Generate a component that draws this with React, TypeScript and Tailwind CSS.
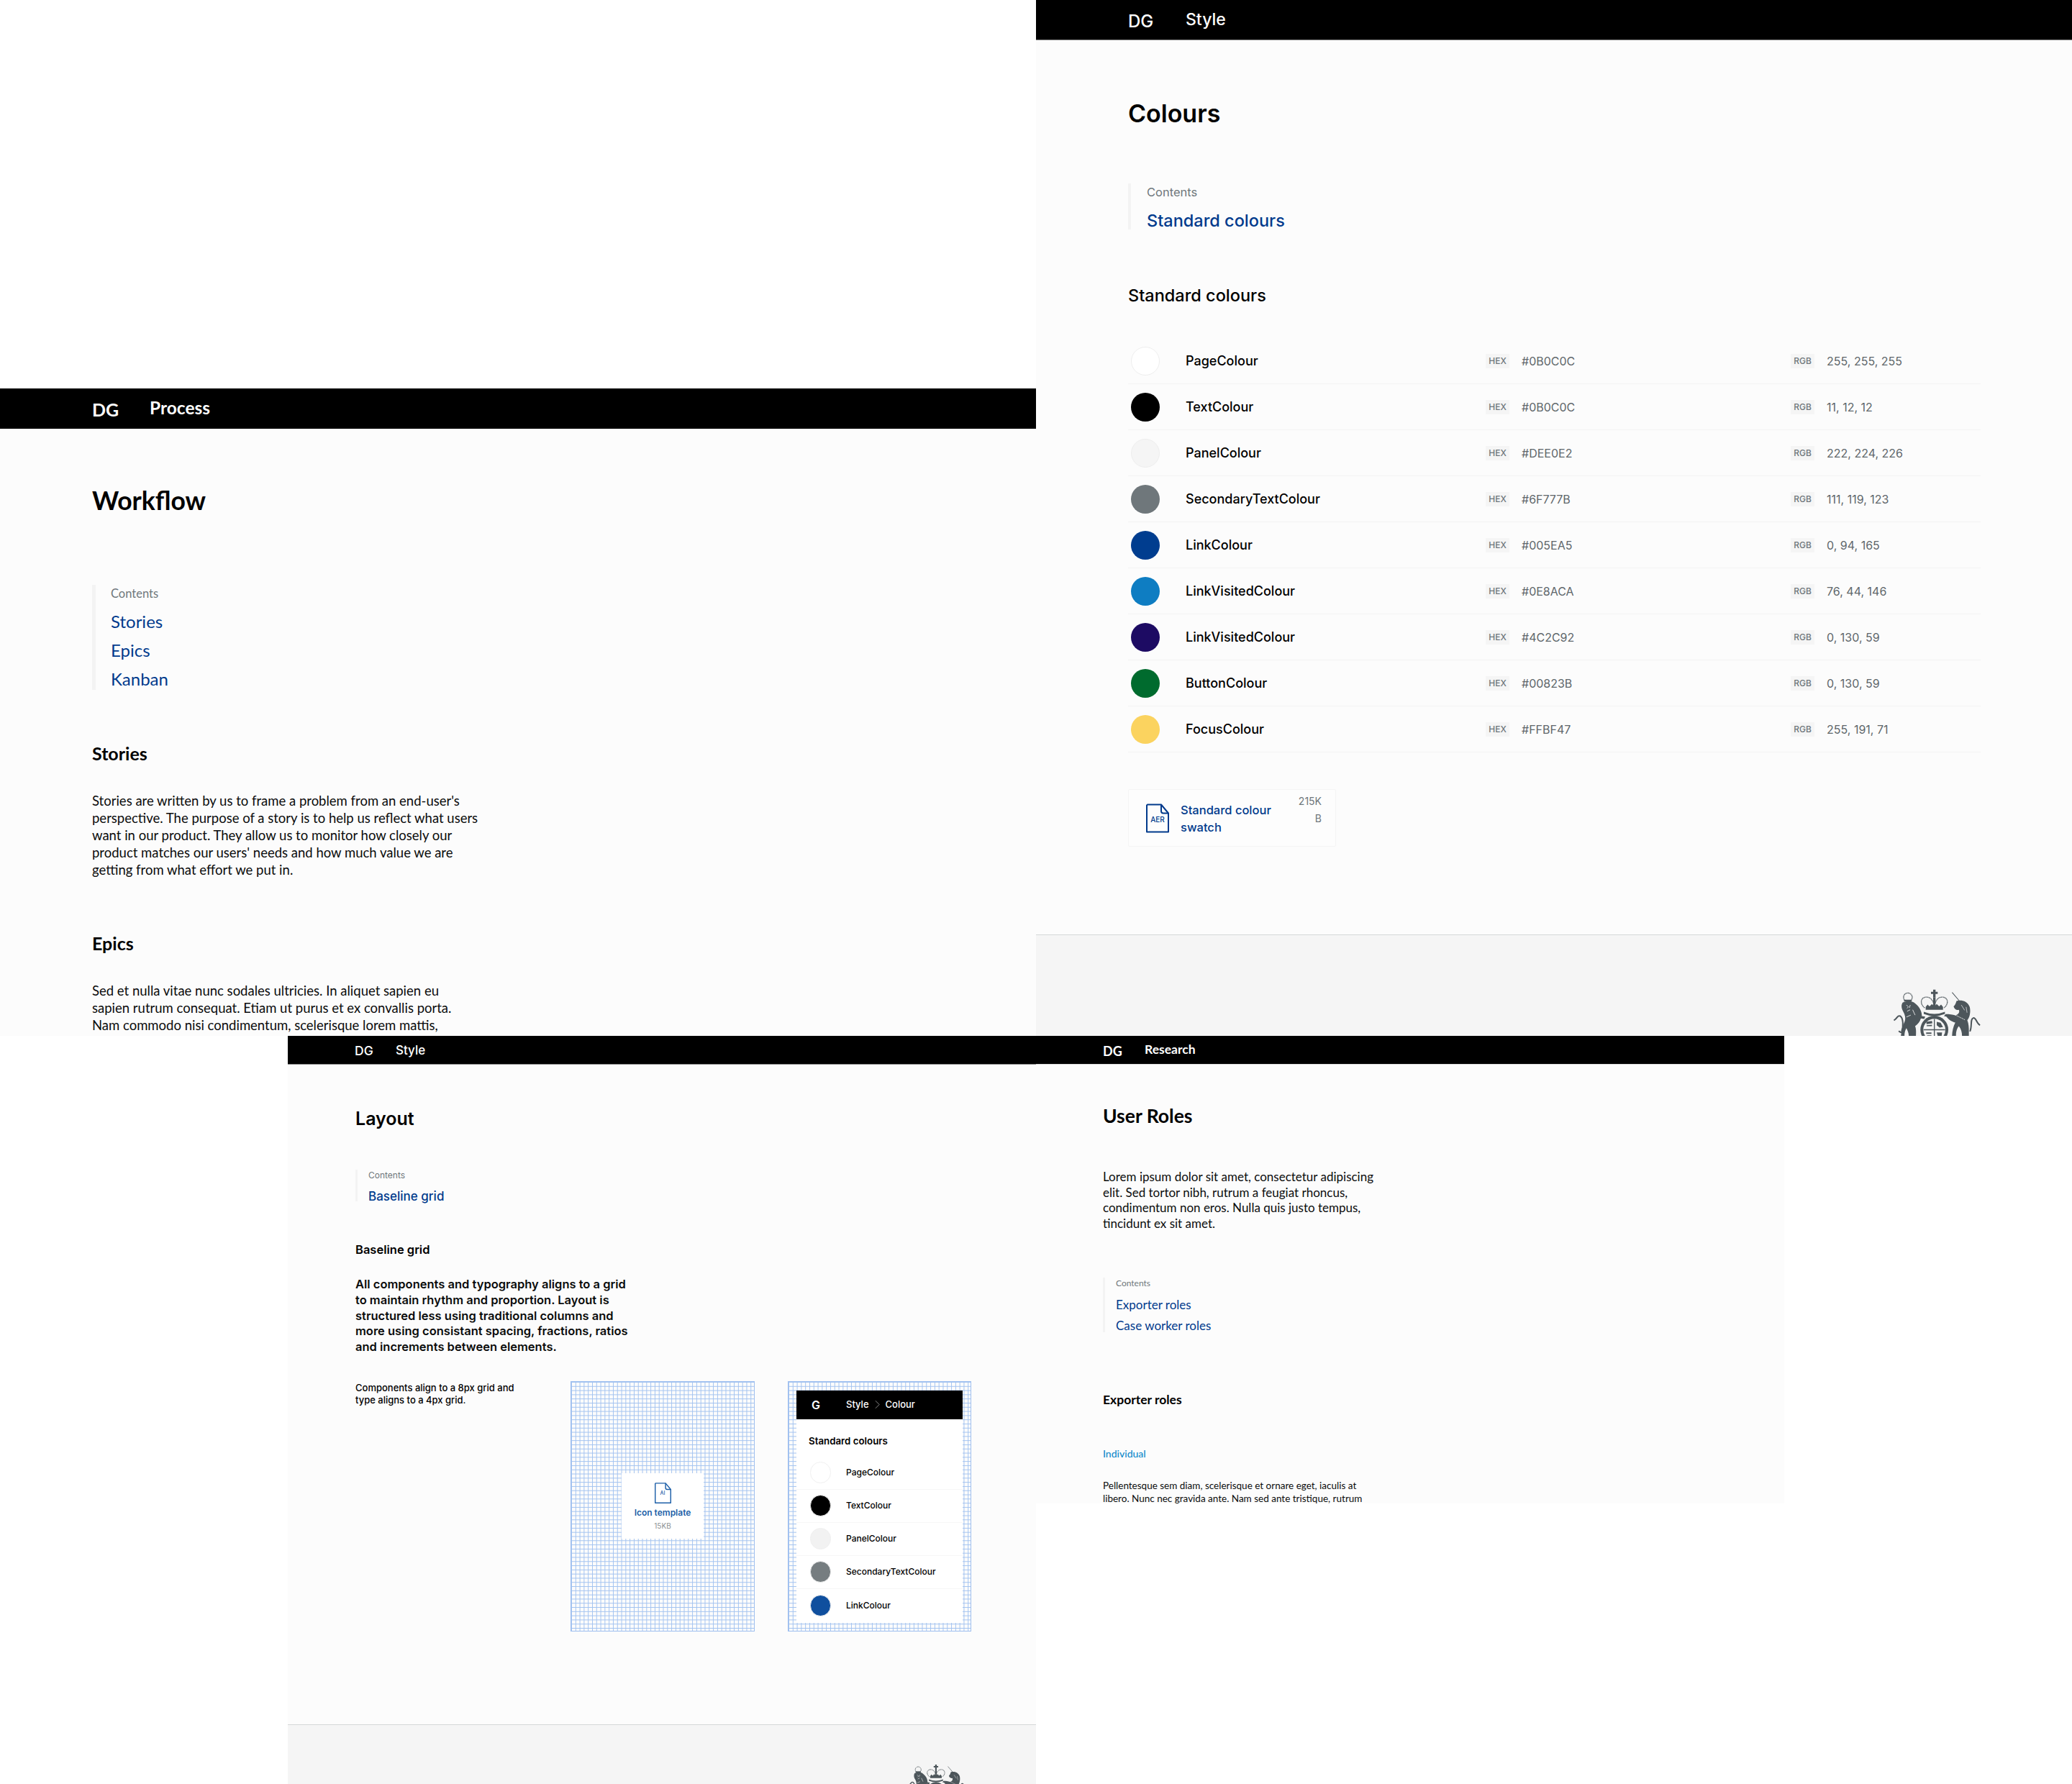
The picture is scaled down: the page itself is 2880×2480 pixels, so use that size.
import React from "react";

const plex = "font-['Inter','Liberation_Sans',sans-serif]";
const gds = "font-['Lato','Liberation_Sans',sans-serif]";

const rows = [
  ["PageColour", "#0B0C0C", "255, 255, 255", "#ffffff", true],
  ["TextColour", "#0B0C0C", "11, 12, 12", "#000000", false],
  ["PanelColour", "#DEE0E2", "222, 224, 226", "#f5f5f5", true],
  ["SecondaryTextColour", "#6F777B", "111, 119, 123", "#6f777b", false],
  ["LinkColour", "#005EA5", "0, 94, 165", "#003d8f", false],
  ["LinkVisitedColour", "#0E8ACA", "76, 44, 146", "#0e7dc2", false],
  ["LinkVisitedColour", "#4C2C92", "0, 130, 59", "#1d0b63", false],
  ["ButtonColour", "#00823B", "0, 130, 59", "#006b2e", false],
  ["FocusColour", "#FFBF47", "255, 191, 71", "#fbd35f", false],
] as const;

function Crest({ className }: { className: string }) {
  const ink = "#4d565b";
  const paper = "#f5f5f5";
  return (
    <svg viewBox="30 0 370 320" className={className} fill={ink}>
      {/* crown */}
      <path d="M203 8h10v9h9v9h-9v14h-10V26h-9v-9h9z" />
      <path d="M203 40h10v46h-10z" />
      <path
        fill="none"
        stroke={ink}
        strokeWidth="4"
        strokeDasharray="4 1.5"
        d="M168 84C144 66 152 34 182 40c12 2 20 14 26 34 6-20 14-32 26-34 30-6 38 26 14 44"
      />
      <path d="M172 80l8-10 8 8 10-10 10 10 10-10 10 10 8-8 8 10v12h-72z" />
      <path d="M164 100q44 18 88 0v9q-44 18-88 0z" />
      {/* lion */}
      <circle cx="98" cy="40" r="18" fill="none" stroke={ink} strokeWidth="4" strokeDasharray="4 1.5" />
      <path d="M82 50h32v8H82z" />
      <path d="M76 62C90 55 115 55 124 62c18 13 33 33 32 56l14 2-4 10-14-2c-4 14-12 24-24 32 7 15 2 35 4 52h-32c5-17-2-32-8-44-7 12-10 27-7 44H68c2-22 4-47 17-72 5-15 0-30-6-40-9-15-9-28-3-38z" />
      <path fill="none" stroke={paper} strokeWidth="2.5" d="M92 72l8 8-6 6M108 72l-4 12M95 98l12-6M118 92l10 22M92 122l18-8" />
      <path fill="none" stroke={ink} strokeWidth="6" d="M72 182c9-24 6-56-6-64-12-5-8 6-26 18" />
      <path fill="none" stroke={ink} strokeWidth="6" d="M60 180c4 4 8 6 14 6" />
      {/* unicorn */}
      <path fill="none" stroke={ink} strokeWidth="3" d="M282 20l36 42" />
      <path d="M300 55c20-5 45 0 55 25 5 20 0 45-10 55 10 25 5 55 7 77h-30c3-17 0-37-12-52-10 10-15 35-10 52h-18c-2-22 3-47 13-67-15-5-25-10-37-25l-10-2 7-8c15 0 30 2 40 5 10-3 20-10 15-23-10 3-18-2-22-14 7-6 10-16 12-23z" />
      <path fill="none" stroke={paper} strokeWidth="3" strokeDasharray="3 2" d="M296 114l40 20" />
      <path fill="none" stroke={paper} strokeWidth="2" d="M320 72l14 22M340 80l4 24" />
      <path fill="none" stroke={ink} strokeWidth="6" d="M356 182c10-22 0-52 14-56 12-2 14 24 28 30" />
      {/* shield */}
      <circle cx="208" cy="175" r="58" />
      <circle cx="208" cy="175" r="46" fill={paper} />
      <path d="M206 130h4v90h-4zM163 173h90v4h-90z" />
      <path d="M174 142l24-4 2 10-24 4zM176 156l22-2v6h-22zM218 142l16 4 10 18-14 2-12-10zM174 186h22v6h-22zM178 198h18v6h-18zM218 186h22l-2 18-14 4z" />
    </svg>
  );
}

function FileIcon({ label, className, textClass }: { label: string; className: string; textClass: string }) {
  return (
    <div className={`relative shrink-0 ${className}`}>
      <svg viewBox="0 0 32 40" className="h-full w-full" fill="none" stroke="currentColor" strokeWidth="2" strokeLinejoin="round">
        <path d="M2 1h19l10 12v26H1V2z" />
        <path d="M21 1v9c0 2 1 3 3 3h7" />
      </svg>
      <span className={`absolute inset-x-0 text-center font-medium ${textClass}`}>{label}</span>
    </div>
  );
}

function Window({ className, children }: { className: string; children: React.ReactNode }) {
  return <section className={`absolute flex flex-col overflow-hidden bg-[#fcfcfc] ${className}`}>{children}</section>;
}

function ColoursWindow() {
  return (
    <Window className={`left-[1440px] top-0 h-[1440px] w-[1440px] ${plex}`}>
      <header className="flex h-[56px] shrink-0 items-center border-b border-[#888] bg-black pl-[128px] font-medium text-white">
        <span className="w-[80px] pt-1 text-[24px] leading-none">DG</span>
        <span className="pb-[1px] text-[23px] leading-none">Style</span>
      </header>
      <div className="flex h-[1243px] flex-col pl-[128px] pt-[78px]">
        <h1 className="text-[34px] font-semibold leading-[48px] text-black">Colours</h1>
        <div className="mt-[73px] h-[64px] border-l-[4px] border-[#f3f3f3] pl-[22px]">
          <p className="pt-[2px] text-[16.5px] leading-[20px] text-[#6f777b]">Contents</p>
          <a className="mt-[14px] block text-[23.5px] font-medium leading-[32px] text-[#003a8c]">Standard colours</a>
        </div>
        <h2 className="mt-[76px] text-[23.5px] font-medium leading-[32px] text-black">Standard colours</h2>
        <div className="mt-[43px] w-[1185px]">
          {rows.map(([name, hex, rgb, colour, outline], i) => (
            <div key={i} className="flex h-[64px] items-center border-b border-[#f3f3f3]">
              <div className="w-[80px] pl-[4px]">
                <div
                  className={`h-[40px] w-[40px] rounded-full ${outline ? "border border-[#eeeeee]" : ""}`}
                  style={{ backgroundColor: colour }}
                />
              </div>
              <span className="w-[417px] text-[18px] font-medium text-black">{name}</span>
              <span className="flex h-[20px] w-[33px] items-center justify-center bg-[#f5f5f5] text-[12px] font-medium text-[#6f777b]">HEX</span>
              <span className="ml-[17px] w-[374px] text-[16px] text-[#5f676b]">{hex}</span>
              <span className="flex h-[20px] w-[33px] items-center justify-center bg-[#f5f5f5] text-[12px] font-medium text-[#6f777b]">RGB</span>
              <span className="ml-[17px] text-[16px] text-[#5f676b]">{rgb}</span>
            </div>
          ))}
        </div>
        <div className="mt-[51px] flex h-[80px] w-[289px] items-center rounded-[2px] border border-[#f5f5f5] bg-[#fdfdfd] pl-[24px] pr-[19px]">
          <FileIcon label="AER" className="h-[41px] w-[32px] text-[#003a8c]" textClass="top-[15px] text-[10px]" />
          <a className="ml-[16px] w-[130px] pt-[2px] text-[16.5px] font-medium leading-[24px] text-[#003a8c]">Standard colour swatch</a>
          <span className="mb-[22px] ml-auto w-[40px] text-right text-[14px] leading-[24px] text-[#6f777b]">215K B</span>
        </div>
      </div>
      <footer className="flex flex-1 justify-end overflow-hidden border-t border-[#d5d8d8] bg-[#f5f5f5] pr-[127px] pt-[73px]">
        <Crest className="h-[107px] w-[124px] shrink-0" />
      </footer>
    </Window>
  );
}

function WorkflowWindow() {
  return (
    <Window className={`left-0 top-[540px] h-[900px] w-[1440px] ${gds}`}>
      <header className="flex h-[56px] shrink-0 items-center bg-black pl-[128px] font-bold text-white">
        <span className="w-[80px] pt-[3px] text-[25px] leading-none">DG</span>
        <span className="pb-[2px] text-[24.5px] leading-none">Process</span>
      </header>
      <div className="pl-[128px] pt-[76px]">
        <h1 className="text-[35.5px] font-bold leading-[48px] text-black">Workflow</h1>
        <div className="mt-[93px] h-[146px] border-l-[5px] border-[#f3f3f3] pl-[21px]">
          <p className="pt-[2px] text-[16.5px] leading-[20px] text-[#6f777b]">Contents</p>
          <ul className="mt-[9px] text-[24px] leading-[40px] text-[#003a8c]">
            <li>Stories</li>
            <li>Epics</li>
            <li>Kanban</li>
          </ul>
        </div>
        <h2 className="mt-[72px] text-[25px] font-bold leading-[32px] text-black">Stories</h2>
        <p className="mt-[38px] w-[537px] text-[18.5px] leading-[24px] text-[#0b0c0c]">
          Stories are written by us to frame a problem from an end-user's perspective. The purpose of a story is to help us reflect what users want in our product. They allow us to monitor how closely our product matches our users' needs and how much value we are getting from what effort we put in.
        </p>
        <h2 className="mt-[74px] text-[25px] font-bold leading-[32px] text-black">Epics</h2>
        <p className="mt-[38px] w-[537px] text-[18.5px] leading-[24px] text-[#0b0c0c]">
          Sed et nulla vitae nunc sodales ultricies. In aliquet sapien eu sapien rutrum consequat. Etiam ut purus et ex convallis porta. Nam commodo nisi condimentum, scelerisque lorem mattis,
        </p>
      </div>
    </Window>
  );
}

const miniRows = [
  ["PageColour", "#ffffff"],
  ["TextColour", "#000000"],
  ["PanelColour", "#f2f2f2"],
  ["SecondaryTextColour", "#767d80"],
  ["LinkColour", "#0f4f9e"],
];

const gridLines =
  "bg-[linear-gradient(#a3c3f0_1px,transparent_1px),linear-gradient(90deg,#a3c3f0_1px,transparent_1px)] bg-[size:5.8px_5.8px]";

function LayoutWindow() {
  return (
    <Window className={`left-[400px] top-[1440px] h-[1040px] w-[1040px] ${plex}`}>
      <header className="flex h-[40px] shrink-0 items-center border-b border-[#888] bg-black pl-[93px] font-medium text-white">
        <span className="w-[57px] pt-[2px] text-[17.5px] leading-none">DG</span>
        <span className="pt-[1px] text-[17px] leading-none">Style</span>
      </header>
      <div className="flex h-[917px] flex-col pl-[94px] pt-[58px]">
        <h1 className="text-[25px] font-semibold leading-[34px] text-black">Layout</h1>
        <div className="mt-[54px] h-[44px] border-l-[3px] border-[#f3f3f3] pl-[15px]">
          <p className="text-[12px] leading-[16px] text-[#6f777b]">Contents</p>
          <a className="mt-[11px] block text-[17px] font-medium leading-[20px] text-[#003a8c]">Baseline grid</a>
        </div>
        <h2 className="mt-[56px] text-[16.5px] font-semibold leading-[22px] text-black">Baseline grid</h2>
        <p className="mt-[27px] w-[390px] text-[16.5px] font-semibold leading-[21.8px] text-[#0b0c0c]">
          All components and typography aligns to a grid to maintain rhythm and proportion. Layout is structured less using traditional columns and more using consistant spacing, fractions, ratios and increments between elements.
        </p>
        <div className="mt-[36px] flex">
          <p className="w-[299px] pr-[60px] pt-[1px] text-[13px] font-medium leading-[17px] text-black">
            Components align to a 8px grid and type aligns to a 4px grid.
          </p>
          <div className={`h-[348px] w-[256px] border border-[#9fbfef] ${gridLines} flex items-center justify-center`}>
            <div className="flex h-[91px] w-[114px] flex-col items-center bg-white pt-[13px]">
              <FileIcon label="AI" className="h-[29px] w-[23px] text-[#1d5fa8]" textClass="top-[10px] text-[7px]" />
              <a className="mt-[5px] text-[12px] font-semibold leading-[16px] text-[#1d5fa8]">Icon template</a>
              <span className="mt-[3px] text-[10px] leading-[14px] text-[#8a9093]">15KB</span>
            </div>
          </div>
          <div className={`ml-[46px] h-[348px] w-[255px] border border-[#9fbfef] ${gridLines} px-[11px] pt-[12px]`}>
            <div className="h-[323px] bg-white">
              <div className="flex h-[40px] items-center bg-black pl-[21px] text-[13px] font-medium text-white">
                <span className="w-[48px] text-[16px] font-semibold">G</span>
                <span>Style</span>
                <svg viewBox="0 0 8 14" className="mx-[8px] h-[13px] w-[7px]" fill="none" stroke="#999" strokeWidth="1">
                  <path d="M1 1l6 6-6 6" />
                </svg>
                <span>Colour</span>
              </div>
              <h3 className="pl-[17px] pt-[20px] text-[13.3px] font-semibold leading-[20px] text-black">Standard colours</h3>
              <div className="mt-[12px]">
                {miniRows.map(([name, colour], i) => (
                  <div key={name} className={`flex h-[46px] items-center pl-[19px] ${i < 4 ? "border-b border-[#f6f6f6]" : ""}`}>
                    <div className="h-[30px] w-[29px] rounded-full border border-[#f0f0f0]" style={{ backgroundColor: colour }} />
                    <span className="ml-[21px] text-[12px] font-medium text-black">{name}</span>
                  </div>
                ))}
              </div>
            </div>
          </div>
        </div>
      </div>
      <footer className="flex flex-1 justify-end overflow-hidden border-t border-[#d5d8d8] bg-[#f5f5f5] pr-[96px] pt-[53px]">
        <Crest className="h-[72px] w-[83px] shrink-0" />
      </footer>
    </Window>
  );
}

function RolesWindow() {
  return (
    <Window className={`left-[1440px] top-[1440px] h-[650px] w-[1040px] ${gds}`}>
      <header className="flex h-[40px] shrink-0 items-center border-b border-[#ddd] bg-black pl-[93px] font-bold text-white">
        <span className="w-[58px] pt-[2px] text-[18px] leading-none">DG</span>
        <span className="pb-[2px] text-[17.5px] leading-none">Research</span>
      </header>
      <div className="pl-[93px] pt-[55px]">
        <h1 className="text-[26.5px] font-bold leading-[32px] text-black">User Roles</h1>
        <p className="mt-[58px] w-[385px] text-[17px] leading-[21.7px] text-[#0b0c0c]">
          Lorem ipsum dolor sit amet, consectetur adipiscing elit. Sed tortor nibh, rutrum a feugiat rhoncus, condimentum non eros. Nulla quis justo tempus, tincidunt ex sit amet.
        </p>
        <div className="mt-[64px] h-[76px] border-l-[3px] border-[#f3f3f3] pl-[15px]">
          <p className="text-[12px] leading-[16px] text-[#6f777b]">Contents</p>
          <ul className="mt-[7px] text-[17px] leading-[29px] text-[#003a8c]">
            <li>Exporter roles</li>
            <li>Case worker roles</li>
          </ul>
        </div>
        <h2 className="mt-[83px] text-[17.5px] font-bold leading-[22px] text-black">Exporter roles</h2>
        <h3 className="mt-[55px] text-[14px] font-medium leading-[18px] text-[#0e8aca]">Individual</h3>
        <p className="mt-[26px] w-[375px] text-[13.5px] leading-[18px] text-[#0b0c0c]">
          Pellentesque sem diam, scelerisque et ornare eget, iaculis at libero. Nunc nec gravida ante. Nam sed ante tristique, rutrum
        </p>
      </div>
    </Window>
  );
}

export default function App() {
  return (
    <main className="relative h-[2480px] w-[2880px] overflow-hidden bg-white">
      <ColoursWindow />
      <WorkflowWindow />
      <LayoutWindow />
      <RolesWindow />
    </main>
  );
}
